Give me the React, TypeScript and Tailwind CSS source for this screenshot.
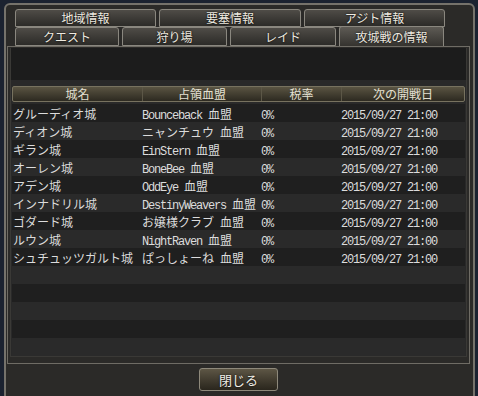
import React from 'react';

type Row = { name: string; clan: string; tax: string; date: string };

const rows: Row[] = [
  { name: 'グルーディオ城', clan: 'Bounceback 血盟', tax: '0%', date: '2015/09/27 21:00' },
  { name: 'ディオン城', clan: 'ニャンチュウ 血盟', tax: '0%', date: '2015/09/27 21:00' },
  { name: 'ギラン城', clan: 'EinStern 血盟', tax: '0%', date: '2015/09/27 21:00' },
  { name: 'オーレン城', clan: 'BoneBee 血盟', tax: '0%', date: '2015/09/27 21:00' },
  { name: 'アデン城', clan: 'OddEye 血盟', tax: '0%', date: '2015/09/27 21:00' },
  { name: 'インナドリル城', clan: 'DestinyWeavers 血盟', tax: '0%', date: '2015/09/27 21:00' },
  { name: 'ゴダード城', clan: 'お嬢様クラブ 血盟', tax: '0%', date: '2015/09/27 21:00' },
  { name: 'ルウン城', clan: 'NightRaven 血盟', tax: '0%', date: '2015/09/27 21:00' },
  { name: 'シュチュッツガルト城', clan: 'ぱっしょーね 血盟', tax: '0%', date: '2015/09/27 21:00' },
];

// half-width latin in a mono face, japanese at full size
const Mixed = ({ text }: { text: string }) => {
  const parts = text.split(/([\x20-\x7e]+)/).filter(Boolean);
  return (
    <>
      {parts.map((p, i) =>
        /^[\x20-\x7e]+$/.test(p) ? (
          <span key={i} className="font-['Liberation_Mono',monospace] text-[12px] tracking-[-1.2px] whitespace-pre">
            {p}
          </span>
        ) : (
          <span key={i}>{p}</span>
        )
      )}
    </>
  );
};

const Tab = ({ label, w, active = false }: { label: string; w: string; active?: boolean }) => (
  <div
    className={`${w} flex items-center justify-center rounded-t-[3px] border border-[#8a877f] text-[12px] leading-none text-[#eeeae0] [text-shadow:0_0_2px_#000] ${
      active
        ? 'h-[20px] border-b-0 bg-gradient-to-b from-[#5e5b55] to-[#35332f]'
        : 'h-full bg-gradient-to-b from-[#4f4c47] to-[#2c2b28]'
    }`}
  >
    {label}
  </div>
);

export default function App() {
  const empty = 14 - rows.length;
  return (
    <div className="w-[478px] h-[396px] overflow-hidden bg-[#1b2230] pt-[3px] pl-[4px] pr-[3px] font-['Noto_Sans_CJK_JP',sans-serif]">
      <div className="h-[400px] rounded-t-[6px] border-2 border-[#75726b] bg-[#2b2a28] flex flex-col">
        {/* tabs */}
        <div className="pl-[9px] pt-[4px] flex flex-col">
          <div className="flex h-[18px] gap-[3px]">
            <Tab label="地域情報" w="w-[141px]" />
            <Tab label="要塞情報" w="w-[142px]" />
            <Tab label="アジト情報" w="w-[141px]" />
          </div>
          <div className="flex h-[19px] gap-[3px] items-end">
            <Tab label="クエスト" w="w-[104px]" />
            <Tab label="狩り場" w="w-[105px]" />
            <Tab label="レイド" w="w-[106px]" />
            <Tab label="攻城戦の情報" w="w-[105px]" active />
          </div>
        </div>

        {/* panel */}
        <div className="ml-[1px] w-[463px] h-[318px] border-t border-x border-b border-[#6f6c65] bg-[#2b2a28] px-[2px] pt-[1px]">
          <div className="h-[309px] border-x border-b border-[#3a3936] bg-[#292929]">
            <div className="h-[32px] bg-[#1c1c1c]" />
            <div className="h-[6px]" />
            {/* header */}
            <div className="mx-[1px] h-[16px] flex rounded-[2px] border border-[#77725f] bg-gradient-to-b from-[#5a5442] to-[#2d2a21] text-[12px] leading-[14px] text-[#e4e0d2]">
              <div className="w-[130px] text-center border-r border-[#5c5747]">城名</div>
              <div className="w-[119px] text-center border-r border-[#5c5747]">占領血盟</div>
              <div className="w-[80px] text-center border-r border-[#5c5747]">税率</div>
              <div className="flex-1 text-center">次の開戦日</div>
            </div>
            <div className="h-[2px]" />
            {/* rows */}
            <div className="mx-[1px] flex flex-col text-[12px] text-[#dcdcdc]">
              {rows.map((r, i) => (
                <div
                  key={r.name}
                  className={`h-[18px] flex pt-[2px] leading-[16px] whitespace-nowrap ${
                    i % 2 === 0 ? 'bg-[#1f1f1f]' : 'bg-[#2a2a2a]'
                  }`}
                >
                  <div className="w-[130px] pl-[1px]">{r.name}</div>
                  <div className="w-[119px]">
                    <Mixed text={r.clan} />
                  </div>
                  <div className="w-[80px]">
                    <Mixed text={r.tax} />
                  </div>
                  <div className="flex-1">
                    <Mixed text={r.date} />
                  </div>
                </div>
              ))}
              {Array.from({ length: empty }).map((_, j) => (
                <div
                  key={j}
                  className={`h-[18px] ${(rows.length + j) % 2 === 0 ? 'bg-[#1f1f1f]' : 'bg-[#2a2a2a]'}`}
                />
              ))}
            </div>
          </div>
        </div>

        {/* footer */}
        <div className="flex justify-center pt-[4px] pr-[2px]">
          <button className="w-[79px] h-[23px] rounded-[3px] border border-[#8e897b] bg-gradient-to-b from-[#5d5645] to-[#2a261d] text-[13px] leading-none text-[#f2efe6] [text-shadow:0_0_2px_#000]">
            閉じる
          </button>
        </div>
      </div>
    </div>
  );
}
